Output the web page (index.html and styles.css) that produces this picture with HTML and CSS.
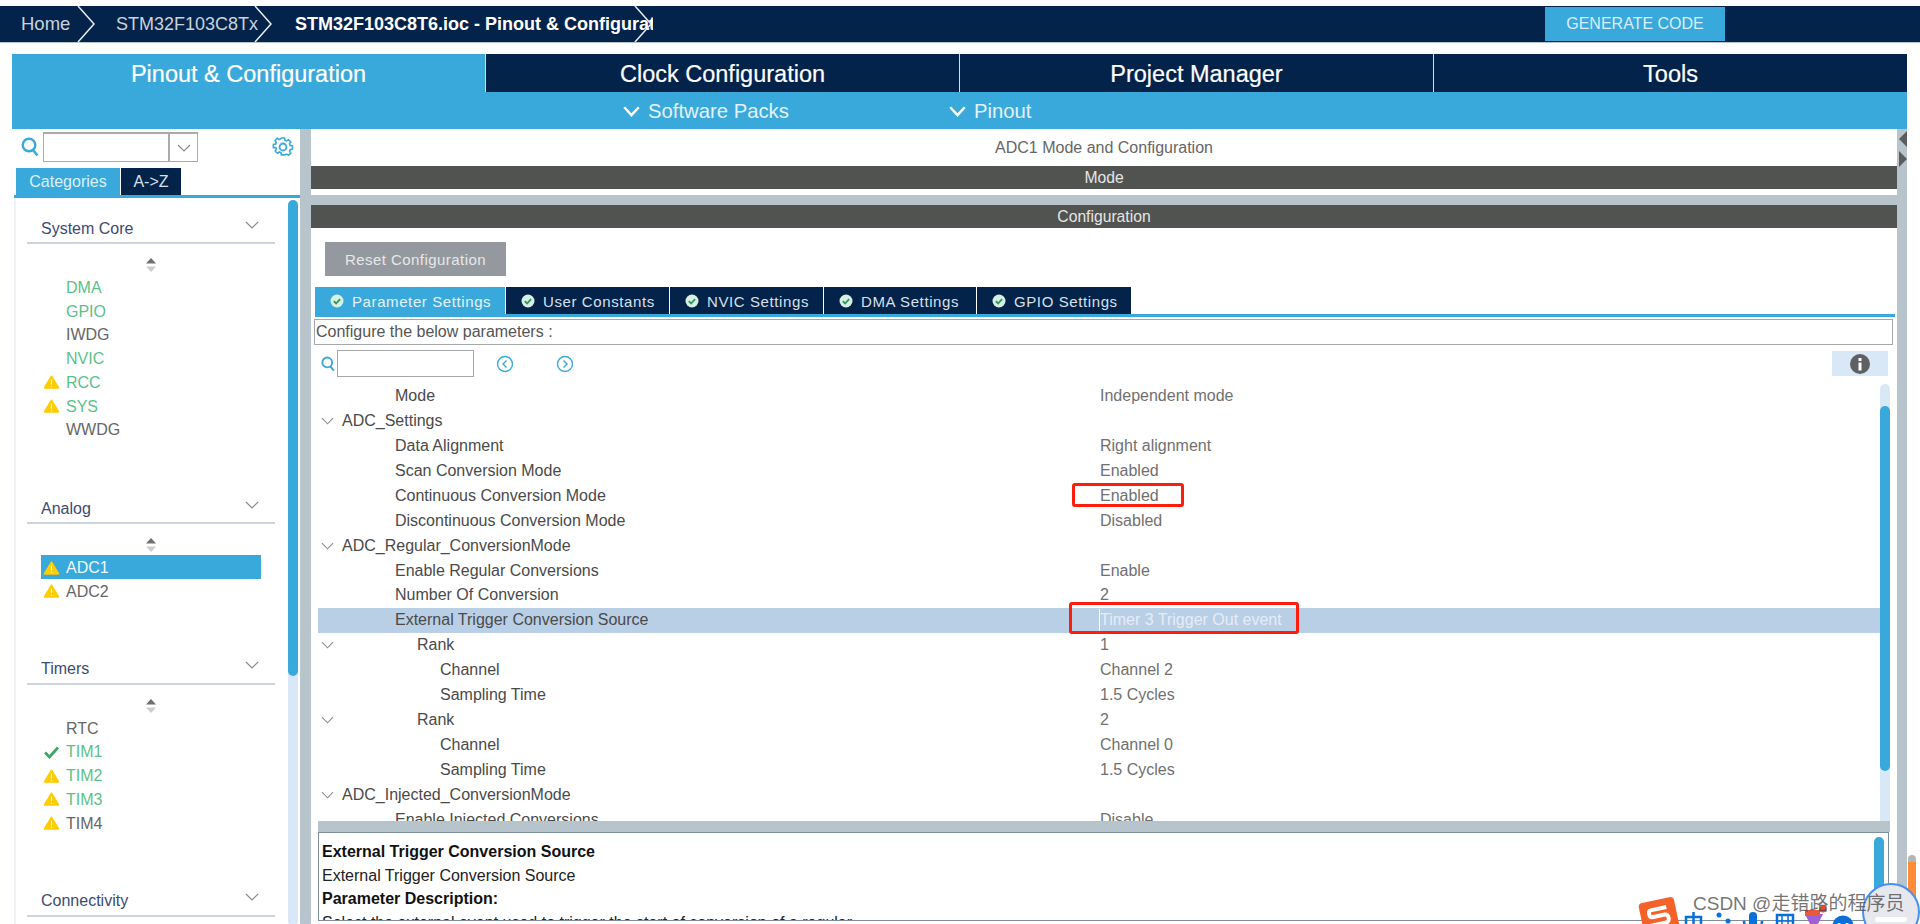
FILE: index.html
```html
<!DOCTYPE html>
<html lang="en">
<head>
    <meta charset="UTF-8">
    <title>STM32F103C8T6.ioc - Pinout &amp; Configuration</title>
    <link rel="stylesheet" href="styles.css">
</head>
<body>

<svg class="defs" width="0" height="0">
    <symbol id="warn" viewBox="0 0 16 14">
        <path d="M8 .6c.5 0 .8.3 1 .7l6.6 11c.4.7 0 1.500-.9 1.500H1.300c-.9 0-1.300-.8-.9-1.500L7 1.300c.2-.4.5-.7 1-.7z" fill="#ffcc00"/>
        <path d="M8 4.500v5M8 10.800v1.200" stroke="#fff6c8" stroke-width="1.300" fill="none"/>
    </symbol>
    <symbol id="tick" viewBox="0 0 16 14">
        <path d="M1.500 7.500l4.500 4.500 8.500-9.500" stroke="#3fa568" stroke-width="2.800" fill="none"/>
    </symbol>
    <symbol id="chev" viewBox="0 0 14 8">
        <path d="M1 1l6 6 6-6" stroke="#8b8b8b" stroke-width="1.200" fill="none"/>
    </symbol>
    <symbol id="sort" viewBox="0 0 10 14">
        <path d="M5 0l5 5.500H0z" fill="#6d6f70"/>
        <path d="M5 14l5-5.500H0z" fill="#c9cdd0"/>
    </symbol>
    <symbol id="ok" viewBox="0 0 14 14">
        <circle cx="7" cy="7" r="6.500" fill="#d8efe3"/>
        <path d="M3.800 7.200l2.300 2.300 4-4.400" stroke="#2f9560" stroke-width="1.800" fill="none"/>
    </symbol>
    <symbol id="search" viewBox="0 0 18 20">
        <circle cx="8" cy="8" r="6.300" stroke="#39a9dc" stroke-width="2.400" fill="none"/>
        <path d="M12 13l4.500 5.500" stroke="#39a9dc" stroke-width="2.600" fill="none"/>
    </symbol>
    <symbol id="crumb-sep" viewBox="0 0 18 36">
        <path d="M1 0l16 18L1 36" stroke="#e8edf1" stroke-width="1.500" fill="none"/>
    </symbol>
</svg>

<div class="breadcrumb">
    <div class="crumb crumb-home">Home<svg class="crumb-arrow"><use href="#crumb-sep"/></svg></div>
    <div class="crumb crumb-mcu">STM32F103C8Tx<svg class="crumb-arrow"><use href="#crumb-sep"/></svg></div>
    <div class="crumb crumb-file">STM32F103C8T6.ioc - Pinout &amp; Configuration<svg class="crumb-arrow"><use href="#crumb-sep"/></svg></div>
    <button class="generate">GENERATE CODE</button>
</div>

<div class="app">
    <div class="main-tabs">
        <div class="main-tab active">Pinout &amp; Configuration</div>
        <div class="main-tab">Clock Configuration</div>
        <div class="main-tab">Project Manager</div>
        <div class="main-tab">Tools</div>
    </div>
    <div class="sub-bar">
        <div class="sub-item sub-packs"><svg class="sub-chev" viewBox="0 0 14 9"><path d="M1 1l6 6.500 6-6.500" stroke="#fff" stroke-width="2" fill="none"/></svg>Software Packs</div>
        <div class="sub-item sub-pinout"><svg class="sub-chev" viewBox="0 0 14 9"><path d="M1 1l6 6.500 6-6.500" stroke="#fff" stroke-width="2" fill="none"/></svg>Pinout</div>
    </div>

    <div class="workspace">
        <!-- 左侧分类 -->
        <div class="left-panel">
            <div class="left-search">
                <svg class="search-icon"><use href="#search"/></svg>
                <div class="combo">
                    <div class="combo-input"></div>
                    <div class="combo-arrow"><svg class="chev-small"><use href="#chev"/></svg></div>
                </div>
                <svg class="gear" viewBox="0 0 24 24">
                    <path d="M10 2h4l.6 2.800 1.900.8 2.400-1.500 2.800 2.800-1.500 2.400.8 1.900 2.800.6v4l-2.800.6-.8 1.900 1.500 2.400-2.800 2.800-2.400-1.500-1.900.8L14 23h-4l-.6-2.800-1.900-.8-2.400 1.500-2.800-2.800 1.500-2.400-.8-1.900L0 14v-4l2.800-.6.8-1.900L2.100 5.100l2.800-2.800 2.400 1.500 1.900-.8z" transform="translate(1.500 0.500) scale(.875)" stroke="#39a9dc" stroke-width="2" fill="none"/>
                    <circle cx="12" cy="12" r="3.800" stroke="#39a9dc" stroke-width="2" fill="none"/>
                </svg>
            </div>
            <div class="left-tabs">
                <div class="left-tab active">Categories</div>
                <div class="left-tab">A-&gt;Z</div>
            </div>
            <div class="left-body">
                <div class="sections">
                    <div class="section">
                        <div class="section-head">System Core<svg class="section-chev"><use href="#chev"/></svg></div>
                        <svg class="sort"><use href="#sort"/></svg>
                        <div class="item green"><span class="mark"></span>DMA</div>
                        <div class="item green"><span class="mark"></span>GPIO</div>
                        <div class="item"><span class="mark"></span>IWDG</div>
                        <div class="item green"><span class="mark"></span>NVIC</div>
                        <div class="item green"><span class="mark"><svg class="mark-icon"><use href="#warn"/></svg></span>RCC</div>
                        <div class="item green"><span class="mark"><svg class="mark-icon"><use href="#warn"/></svg></span>SYS</div>
                        <div class="item"><span class="mark"></span>WWDG</div>
                    </div>
                    <div class="section">
                        <div class="section-head">Analog<svg class="section-chev"><use href="#chev"/></svg></div>
                        <svg class="sort"><use href="#sort"/></svg>
                        <div class="item selected"><span class="mark"><svg class="mark-icon"><use href="#warn"/></svg></span>ADC1</div>
                        <div class="item"><span class="mark"><svg class="mark-icon"><use href="#warn"/></svg></span>ADC2</div>
                    </div>
                    <div class="section">
                        <div class="section-head">Timers<svg class="section-chev"><use href="#chev"/></svg></div>
                        <svg class="sort"><use href="#sort"/></svg>
                        <div class="item"><span class="mark"></span>RTC</div>
                        <div class="item green"><span class="mark"><svg class="mark-icon"><use href="#tick"/></svg></span>TIM1</div>
                        <div class="item green"><span class="mark"><svg class="mark-icon"><use href="#warn"/></svg></span>TIM2</div>
                        <div class="item green"><span class="mark"><svg class="mark-icon"><use href="#warn"/></svg></span>TIM3</div>
                        <div class="item"><span class="mark"><svg class="mark-icon"><use href="#warn"/></svg></span>TIM4</div>
                    </div>
                    <div class="section">
                        <div class="section-head">Connectivity<svg class="section-chev"><use href="#chev"/></svg></div>
                    </div>
                </div>
                <div class="left-scroll"><div class="left-thumb"></div></div>
            </div>
        </div>

        <div class="gutter"></div>

        <!-- 右侧配置 -->
        <div class="content">
            <div class="content-title">ADC1 Mode and Configuration</div>
            <div class="dark-bar">Mode</div>
            <div class="split"></div>
            <div class="dark-bar">Configuration</div>

            <button class="reset">Reset Configuration</button>

            <div class="config-tabs">
                <div class="config-tab tab-param active"><svg class="ok-icon"><use href="#ok"/></svg>Parameter Settings</div>
                <div class="config-tab tab-user"><svg class="ok-icon"><use href="#ok"/></svg>User Constants</div>
                <div class="config-tab tab-nvic"><svg class="ok-icon"><use href="#ok"/></svg>NVIC Settings</div>
                <div class="config-tab tab-dma"><svg class="ok-icon"><use href="#ok"/></svg>DMA Settings</div>
                <div class="config-tab tab-gpio"><svg class="ok-icon"><use href="#ok"/></svg>GPIO Settings</div>
            </div>
            <div class="configure-box">Configure the below parameters :</div>

            <div class="tools">
                <svg class="tools-search"><use href="#search"/></svg>
                <div class="tools-input"></div>
                <svg class="round-btn prev" viewBox="0 0 18 18"><circle cx="9" cy="9" r="7.500" stroke="#39a9dc" stroke-width="1.400" fill="none"/><path d="M10.500 5.500L7 9l3.500 3.500" stroke="#39a9dc" stroke-width="1.400" fill="none"/></svg>
                <svg class="round-btn next" viewBox="0 0 18 18"><circle cx="9" cy="9" r="7.500" stroke="#39a9dc" stroke-width="1.400" fill="none"/><path d="M7.500 5.500L11 9l-3.500 3.500" stroke="#39a9dc" stroke-width="1.400" fill="none"/></svg>
                <div class="info-btn"><svg class="info-icon" viewBox="0 0 20 20"><circle cx="10" cy="10" r="10" fill="#5f6062"/><rect x="8.500" y="8.500" width="3" height="8" fill="#fff"/><rect x="8.500" y="4" width="3" height="3" fill="#fff"/></svg></div>
            </div>

            <div class="table-wrap">
                <div class="rows">
                    <div class="row"><div class="twist"></div><div class="name lvl1">Mode</div><div class="value">Independent mode</div></div>
                    <div class="row"><div class="twist"><svg class="twist-icon"><use href="#chev"/></svg></div><div class="name">ADC_Settings</div></div>
                    <div class="row"><div class="twist"></div><div class="name lvl1">Data Alignment</div><div class="value">Right alignment</div></div>
                    <div class="row"><div class="twist"></div><div class="name lvl1">Scan Conversion Mode</div><div class="value">Enabled</div></div>
                    <div class="row"><div class="twist"></div><div class="name lvl1">Continuous Conversion Mode</div><div class="value">Enabled</div></div>
                    <div class="row"><div class="twist"></div><div class="name lvl1">Discontinuous Conversion Mode</div><div class="value">Disabled</div></div>
                    <div class="row"><div class="twist"><svg class="twist-icon"><use href="#chev"/></svg></div><div class="name">ADC_Regular_ConversionMode</div></div>
                    <div class="row"><div class="twist"></div><div class="name lvl1">Enable Regular Conversions</div><div class="value">Enable</div></div>
                    <div class="row"><div class="twist"></div><div class="name lvl1">Number Of Conversion</div><div class="value">2</div></div>
                    <div class="row active"><div class="twist"></div><div class="name lvl1">External Trigger Conversion Source</div><div class="value">Timer 3 Trigger Out event</div></div>
                    <div class="row"><div class="twist"><svg class="twist-icon"><use href="#chev"/></svg></div><div class="name lvl2">Rank</div><div class="value">1</div></div>
                    <div class="row"><div class="twist"></div><div class="name lvl3">Channel</div><div class="value">Channel 2</div></div>
                    <div class="row"><div class="twist"></div><div class="name lvl3">Sampling Time</div><div class="value">1.5 Cycles</div></div>
                    <div class="row"><div class="twist"><svg class="twist-icon"><use href="#chev"/></svg></div><div class="name lvl2">Rank</div><div class="value">2</div></div>
                    <div class="row"><div class="twist"></div><div class="name lvl3">Channel</div><div class="value">Channel 0</div></div>
                    <div class="row"><div class="twist"></div><div class="name lvl3">Sampling Time</div><div class="value">1.5 Cycles</div></div>
                    <div class="row"><div class="twist"><svg class="twist-icon"><use href="#chev"/></svg></div><div class="name">ADC_Injected_ConversionMode</div></div>
                    <div class="row"><div class="twist"></div><div class="name lvl1">Enable Injected Conversions</div><div class="value">Disable</div></div>
                </div>
                <div class="table-scroll"><div class="table-thumb"></div></div>
            </div>

            <div class="divider"></div>
            <div class="desc">
                <div class="desc-text">
                    <div class="desc-line bold">External Trigger Conversion Source</div>
                    <div class="desc-line">External Trigger Conversion Source</div>
                    <div class="desc-line bold">Parameter Description:</div>
                    <div class="desc-line desc-wrap">Select the external event used to trigger the start of conversion of a regular group</div>
                </div>
                <div class="desc-scroll"></div>
            </div>
        </div>

        <div class="right-strip">
            <svg class="collapse" viewBox="0 0 8 36"><path d="M8 0v16L0 8zM0 20v16l8-8z" fill="#5a5c5e"/></svg>
        </div>
    </div>
</div>

<!-- 标注红框 -->
<div class="red-box red-enabled"></div>
<div class="red-box red-trigger"></div>

<!-- 输入法和水印 -->
<div class="outer-scroll"></div>
<svg class="ime" viewBox="0 0 280 44">
    <g transform="rotate(-12 20 24)">
        <rect x="3" y="8" width="36" height="36" rx="4" fill="#f4612a"/>
        <path d="M30 17H14c-3 0-3 7 0 7h13c4 0 4 8 0 8H10" stroke="#fff" stroke-width="4" fill="none"/>
    </g>
    <rect x="48" y="25" width="15" height="11" stroke="#0a6fd6" stroke-width="2.500" fill="none"/>
    <path d="M55.500 20v24" stroke="#0a6fd6" stroke-width="2.500"/>
    <circle cx="81" cy="23" r="2.500" fill="#0a6fd6"/>
    <circle cx="90" cy="29" r="2.500" fill="#0a6fd6"/>
    <rect x="111" y="20" width="8" height="16" rx="4" fill="#0a6fd6"/>
    <path d="M106 29c0 12 18 12 18 0" stroke="#0a6fd6" stroke-width="2.500" fill="none"/>
    <rect x="139" y="23" width="16" height="21" stroke="#0a6fd6" stroke-width="2.500" fill="none"/>
    <path d="M139 29h16M144 23v21M150 23v21" stroke="#0a6fd6" stroke-width="1.500"/>
    <path d="M167 22h18l-5 10-2 12h-4l-2-12z" fill="#a15fd8"/>
    <circle cx="185" cy="17" r="3.500" fill="#f0492c"/>
    <rect x="167" y="18" width="15" height="6" fill="#e85a3c"/>
    <circle cx="205" cy="34" r="10.500" fill="#0a6fd6"/>
    <circle cx="201" cy="33" r="2" fill="#fff"/>
    <circle cx="209" cy="33" r="2" fill="#fff"/>
</svg>
<div class="assistant"><div class="assistant-bar"></div></div>
<div class="watermark">CSDN @走错路的程序员</div>

</body>
</html>
```

FILE: styles.css
```css
* {
    box-sizing: border-box;
}
html, body {
    margin: 0;
    padding: 0;
}
body {
    width: 1920px;
    height: 924px;
    overflow: hidden;
    position: relative;
    background-color: #fff;
    font-family: "Liberation Sans", Arial, sans-serif;
    font-size: 16px;
    color: #444;
}
.defs {
    position: absolute;
}
button {
    font-family: inherit;
    border: none;
    padding: 0;
}

/* 顶部面包屑 */
.breadcrumb {
    display: flex;
    align-items: center;
    margin-top: 6px;
    height: 37px;
    background-color: #03234b;
    border-bottom: 1px solid #b8c4cb;
}
.crumb {
    position: relative;
    height: 36px;
    line-height: 36px;
    color: #c9d3dd;
    white-space: nowrap;
    overflow: hidden;
}
.crumb-arrow {
    position: absolute;
    right: 1px;
    top: 0;
    width: 18px;
    height: 36px;
}
.crumb-home {
    width: 96px;
    padding-left: 21px;
    font-size: 18.500px;
}
.crumb-mcu {
    width: 177px;
    padding-left: 20px;
    font-size: 18px;
}
.crumb-file {
    width: 380px;
    padding-left: 22px;
    font-size: 18px;
    font-weight: bold;
    color: #fff;
}
.generate {
    margin-left: 892px;
    width: 180px;
    height: 34px;
    background-color: #39a9dc;
    color: #d9eef8;
    font-size: 16px;
}

.app {
    margin: 11px 13px 0 12px;
}

/* 主选项卡 */
.main-tabs {
    display: flex;
    height: 38px;
    background-color: #03234b;
}
.main-tab {
    flex: 1;
    text-align: center;
    line-height: 40px;
    color: #fff;
    font-size: 23.500px;
    border-left: 1px solid #d5dde3;
    -webkit-text-stroke: 0.2px #fff;
}
.main-tab:first-child {
    border-left: none;
}
.main-tab.active {
    background-color: #39a9dc;
}
.sub-bar {
    display: flex;
    height: 37px;
    background-color: #39a9dc;
    color: #e3f2fa;
    font-size: 20.300px;
    line-height: 36px;
    padding-top: 1px;
}
.sub-item {
    display: flex;
    align-items: center;
}
.sub-chev {
    width: 17px;
    height: 11px;
    margin-right: 8px;
}
.sub-packs {
    margin-left: 611px;
    width: 326px;
}

.workspace {
    display: flex;
    height: 795px;
    overflow: hidden;
}

/* 左侧面板 */
.left-panel {
    width: 288px;
    display: flex;
    flex-direction: column;
    background-color: #fff;
}
.left-search {
    display: flex;
    align-items: center;
    height: 39px;
    padding: 3px 0 6px 9px;
}
.search-icon {
    width: 18px;
    height: 20px;
}
.combo {
    display: flex;
    margin-left: 4px;
    width: 155px;
    height: 30px;
    border: 1px solid #a8acaf;
    border-top: 2px solid #a8acaf;
}
.combo-input {
    width: 126px;
    border-right: 2px solid #a8acaf;
}
.combo-arrow {
    flex: 1;
    display: flex;
    align-items: center;
    justify-content: center;
}
.chev-small {
    width: 14px;
    height: 8px;
}
.gear {
    width: 22px;
    height: 22px;
    margin-left: 74px;
}
.left-tabs {
    display: flex;
    height: 30px;
    padding-left: 2px;
    border-bottom: 3px solid #39a9dc;
    margin-left: 2px;
}
.left-tab {
    width: 60px;
    height: 27px;
    line-height: 27px;
    text-align: center;
    background-color: #03234b;
    color: #d7e0e8;
    font-size: 16px;
}
.left-tab.active {
    width: 104px;
    background-color: #39a9dc;
    color: #dcf0fa;
    margin-right: 1px;
}
.left-body {
    flex: 1;
    display: flex;
    min-height: 0;
    border-left: 2px solid #eef1f5;
    margin-left: 2px;
}
.sections {
    width: 272px;
    padding: 15px 0 0 11px;
}
.left-scroll {
    width: 10px;
    height: 100%;
    margin-top: 2px;
    background-color: #d8e8f6;
    border-radius: 5px;
}
.left-thumb {
    height: 476px;
    background-color: #39a9dc;
    border-radius: 5px;
}
.section {
    margin-bottom: 51px;
    width: 248px;
}
.section:first-child {
    margin-bottom: 52px;
}
.section-head {
    display: flex;
    align-items: center;
    justify-content: space-between;
    height: 31px;
    padding: 2px 16px 0 14px;
    color: #3d4a72;
    font-size: 16px;
    border-bottom: 2px solid #ccd5de;
}
.section-chev {
    width: 14px;
    height: 8px;
    margin-top: -8px;
}
.sort {
    display: block;
    width: 10px;
    height: 14px;
    margin: 14px auto 3px;
}
.item {
    display: flex;
    align-items: center;
    height: 23.750px;
    margin: 0 14px;
    padding-top: 2px;
    color: #666;
    font-size: 16px;
}
.item.green {
    color: #5cbf8a;
}
.item.selected {
    background-color: #39a9dc;
    color: #eef8fc;
}
.mark {
    display: block;
    width: 25px;
    padding-left: 2px;
    height: 14px;
    margin-top: -1px;
}
.mark-icon {
    display: block;
    width: 17px;
    height: 14px;
}

.gutter {
    width: 11px;
    background-color: #b8c4cb;
}
.right-strip {
    width: 10px;
    background-color: #b8c4cb;
    position: relative;
}
.collapse {
    position: absolute;
    right: 0;
    top: 2px;
    width: 8px;
    height: 36px;
}

/* 右侧内容 */
.content {
    flex: 1;
    min-width: 0;
    background-color: #fff;
}
.content-title {
    height: 37px;
    line-height: 37px;
    text-align: center;
    font-size: 16px;
    color: #666;
}
.dark-bar {
    height: 23px;
    line-height: 24px;
    text-align: center;
    background-color: #515351;
    color: #e6e6e6;
    font-size: 15.700px;
}
.split {
    height: 16px;
    border-top: 6px solid #fff;
    background-color: #b8c4cb;
}
.reset {
    display: block;
    margin: 14px 0 0 14px;
    width: 181px;
    height: 34px;
    background-color: #93999e;
    color: #e6e8ea;
    font-size: 15px;
    letter-spacing: 0.45px;
}
.config-tabs {
    display: flex;
    margin: 11px 2px 0 4px;
    height: 30px;
    border-bottom: 3px solid #39a9dc;
}
.config-tab {
    display: flex;
    align-items: center;
    height: 27px;
    padding-top: 1px;
    background-color: #03234b;
    color: #d7e0e8;
    font-size: 15px;
    letter-spacing: 0.6px;
    border-right: 1px solid #fff;
    white-space: nowrap;
}
.config-tab.active {
    background-color: #39a9dc;
    color: #e3f2fa;
}
.tab-param { width: 191px; padding-left: 15px; }
.tab-user { width: 164px; padding-left: 15px; }
.tab-nvic { width: 154px; padding-left: 15px; }
.tab-dma { width: 153px; padding-left: 15px; }
.tab-gpio { width: 154px; padding-left: 15px; border-right: none; }
.ok-icon {
    width: 14px;
    height: 14px;
    margin-right: 8px;
}
.configure-box {
    margin: 2px 4px 0 3px;
    height: 26px;
    line-height: 24px;
    border: 1px solid #a4a8ab;
    padding-left: 1px;
    color: #555;
    font-size: 16px;
}
.tools {
    display: flex;
    align-items: center;
    height: 36px;
    padding: 5px 9px 4px 10px;
}
.tools-search {
    width: 14px;
    height: 16px;
}
.tools-input {
    width: 137px;
    height: 27px;
    margin-left: 2px;
    border: 1px solid #a4a8ab;
}
.round-btn {
    width: 18px;
    height: 18px;
}
.prev {
    margin-left: 22px;
}
.next {
    margin-left: 42px;
}
.info-btn {
    margin-left: auto;
    width: 56px;
    height: 25px;
    background-color: #d8e8f6;
    display: flex;
    align-items: center;
    justify-content: center;
}
.info-icon {
    width: 20px;
    height: 20px;
}

/* 参数表 */
.table-wrap {
    display: flex;
    height: 437.500px;
    margin: 2.500px 7px 0;
    overflow: hidden;
}
.rows {
    flex: 1;
    min-width: 0;
    overflow: hidden;
}
.row {
    display: flex;
    align-items: center;
    height: 24.950px;
}
.row.active {
    background-color: #b9cfe6;
}
.twist {
    width: 24px;
    padding-left: 3px;
    display: flex;
    align-items: center;
}
.twist-icon {
    width: 13px;
    height: 8px;
}
.name {
    width: 758px;
    color: #4a4a4a;
    font-size: 16px;
}
.lvl1 { padding-left: 53px; }
.lvl2 { padding-left: 75px; }
.lvl3 { padding-left: 98px; }
.value {
    color: #707070;
    font-size: 16px;
}
.row.active .value {
    color: #e6edf5;
    border-left: 1px solid #fff;
    margin-left: -1px;
    line-height: 22px;
}
.table-scroll {
    width: 10px;
    background-color: #d8e8f6;
    border-radius: 5px 5px 0 0;
}
.table-thumb {
    margin-top: 22px;
    height: 365px;
    background-color: #39a9dc;
    border-radius: 5px;
}
.divider {
    height: 11px;
    margin: 0 7px;
    background-color: #b8c4cb;
}
.desc {
    display: flex;
    height: 89px;
    margin: 0 8px 0 7px;
    border: 1px solid #7d8ea0;
    overflow: hidden;
}
.desc-text {
    flex: 1;
    min-width: 0;
    padding: 7px 0 0 3px;
}
.desc-line {
    height: 23.500px;
    line-height: 23.500px;
    color: #222;
    font-size: 16px;
    white-space: nowrap;
}
.desc-line.bold {
    font-weight: bold;
    color: #111;
}
.desc-wrap {
    width: 535px;
    white-space: normal;
}
.desc-scroll {
    width: 10px;
    height: 100px;
    margin: 4px 4px 0 0;
    background-color: #39a9dc;
    border-radius: 5px;
}

/* 红框 */
.red-box {
    position: absolute;
    border: 3px solid #fd1d0d;
    border-radius: 3px;
}
.red-enabled {
    left: 1072px;
    top: 483px;
    width: 112px;
    height: 24px;
}
.red-trigger {
    left: 1069px;
    top: 602px;
    width: 230px;
    height: 32px;
}

/* 悬浮层 */
.outer-scroll {
    position: absolute;
    left: 1908px;
    top: 855px;
    width: 8px;
    height: 69px;
    background: linear-gradient(#b5b5b5 0 7px, #ff8c38 7px);
    border-radius: 4px 4px 0 0;
}
.ime {
    position: absolute;
    left: 1638px;
    top: 892px;
    width: 280px;
    height: 44px;
}
.assistant {
    position: absolute;
    left: 1862px;
    top: 883px;
    width: 58px;
    height: 58px;
    border-radius: 50%;
    background-color: #e6e8ee;
    border: 2px solid #4a90f0;
}
.assistant-bar {
    width: 32px;
    height: 5px;
    margin: 32px auto 0;
    border-radius: 3px;
    background-color: #fff;
}
.watermark {
    position: absolute;
    left: 1693px;
    top: 892px;
    font-family: "Liberation Sans", "Noto Sans CJK SC", sans-serif;
    font-size: 19px;
    line-height: 24px;
    color: rgba(70, 70, 70, 0.75);
    white-space: nowrap;
}
```
